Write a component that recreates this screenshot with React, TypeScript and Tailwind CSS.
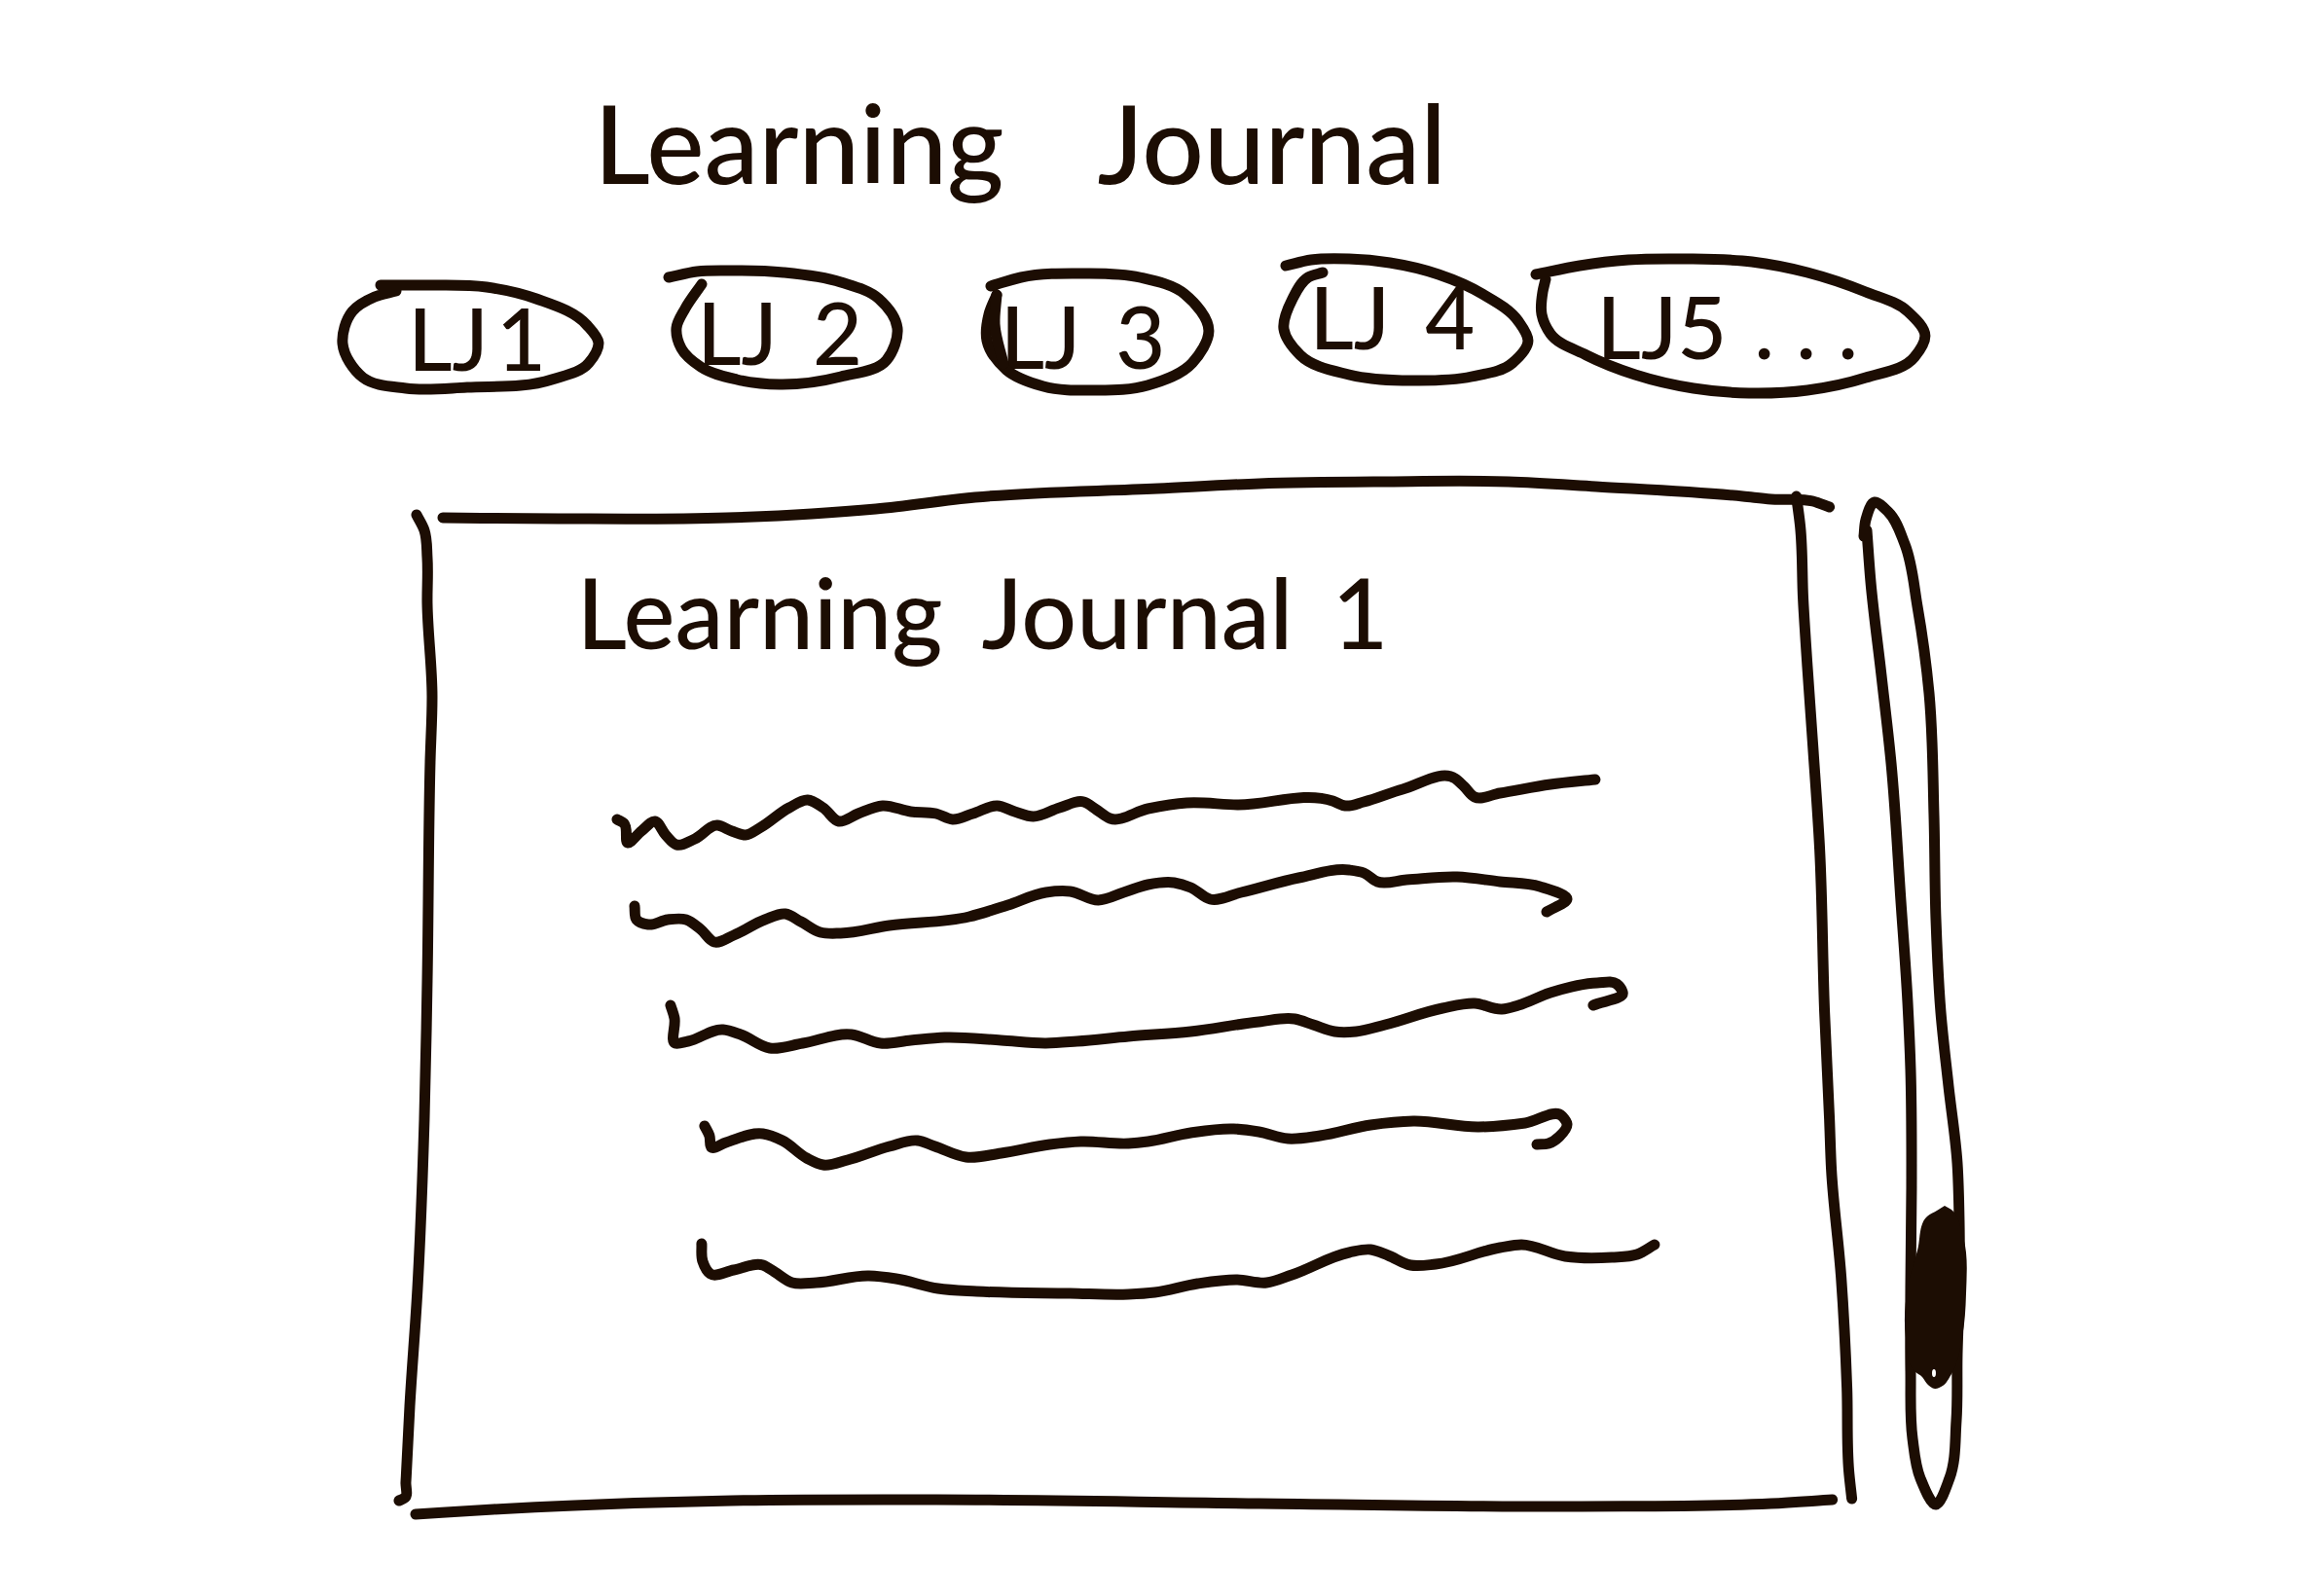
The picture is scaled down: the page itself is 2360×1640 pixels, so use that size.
import { useState } from "react";
import type { ReactNode } from "react";

type Point = [number, number];

const distance = (a: Point, b: Point) => Math.hypot(b[0] - a[0], b[1] - a[1]) || 1;

/** Direction of travel at point i, weighted by how near its neighbours are. */
function tangent(points: Point[], i: number): Point {
  const here = points[i];
  const before = points[i - 1];
  const after = points[i + 1];
  if (!before || !after) {
    const a = before ?? here;
    const b = after ?? here;
    const len = distance(a, b);
    return [(b[0] - a[0]) / len, (b[1] - a[1]) / len];
  }
  const d1 = distance(before, here);
  const d2 = distance(here, after);
  const along = (axis: 0 | 1) =>
    ((d2 * (here[axis] - before[axis])) / d1 + (d1 * (after[axis] - here[axis])) / d2) / (d1 + d2);
  return [along(0), along(1)];
}

/** Turns a list of points into one smooth pen stroke. */
function smooth(points: Point[]): string {
  let d = `M${points[0][0]} ${points[0][1]}`;
  for (let i = 0; i < points.length - 1; i++) {
    const a = points[i];
    const b = points[i + 1];
    const third = distance(a, b) / 3;
    const ta = tangent(points, i);
    const tb = tangent(points, i + 1);
    d += `C${a[0] + ta[0] * third} ${a[1] + ta[1] * third} ${b[0] - tb[0] * third} ${b[1] - tb[1] * third} ${b[0]} ${b[1]}`;
  }
  return d;
}

function Ink({ box, strokes, className, children }: { box: string; strokes: Point[][]; className: string; children?: ReactNode }) {
  return (
    <svg
      viewBox={box}
      preserveAspectRatio="none"
      aria-hidden="true"
      className={className}
      fill="none"
      stroke="currentColor"
      strokeWidth={11}
      strokeLinecap="round"
      strokeLinejoin="round"
    >
      {strokes.map((s, i) => (
        <path key={i} d={smooth(s)} vectorEffect="non-scaling-stroke" />
      ))}
      {children}
    </svg>
  );
}

const tabs: { label: string[]; pad: string; box: string; strokes: Point[][] }[] = [
  {
    label: ["LJ", "1"],
    pad: "gap-2 pr-10 pt-6",
    box: "342 260 336 150",
    strokes: [[[391, 293], [437, 293], [500, 295], [551, 307], [603, 334], [615, 352], [605, 373], [567, 390], [480, 398], [417, 399], [373, 388], [352, 353], [362, 320], [385, 305], [407, 299]]],
  },
  {
    label: ["LJ", "2"],
    pad: "gap-9 pr-20 pt-3",
    box: "678 260 326 150",
    strokes: [[[687, 285], [716, 279], [749, 278], [805, 280], [864, 290], [903, 307], [922, 337], [911, 370], [864, 387], [801, 395], [757, 390], [720, 377], [700, 358], [695, 337], [704, 317], [721, 292]]],
  },
  {
    label: ["LJ", "3"],
    pad: "gap-9 pr-22 pt-5",
    box: "1004 260 305 150",
    strokes: [
      [[1018, 294], [1049, 285], [1114, 281], [1171, 285], [1217, 302], [1242, 340], [1225, 373], [1179, 396], [1125, 401], [1072, 397], [1034, 380], [1014, 350], [1016, 323], [1024, 303]],
      [[1024, 303], [1022, 333], [1031, 374]],
    ],
  },
  {
    label: ["LJ", "4"],
    pad: "gap-9 pr-5 pb-5",
    box: "1309 260 263 150",
    strokes: [[[1321, 273], [1347, 267], [1386, 266], [1428, 270], [1478, 282], [1523, 302], [1560, 330], [1570, 350], [1554, 373], [1512, 387], [1451, 391], [1386, 385], [1336, 365], [1319, 338], [1328, 307], [1344, 285], [1359, 280]]],
  },
  {
    label: ["LJ5", ". . ."],
    pad: "gap-7 pr-10",
    box: "1572 260 446 150",
    strokes: [[[1578, 282], [1623, 273], [1673, 267], [1733, 266], [1800, 269], [1857, 280], [1917, 300], [1960, 320], [1978, 345], [1967, 367], [1917, 388], [1857, 401], [1797, 404], [1740, 399], [1680, 385], [1630, 365], [1593, 343], [1584, 323], [1585, 300], [1588, 287]]],
  },
];

const frame: Point[][] = [
  [[455, 532], [574, 533], [747, 532], [834, 528], [900, 523], [1002, 511], [1190, 502], [1294, 497], [1420, 495], [1550, 495], [1640, 500], [1791, 510], [1820, 513], [1863, 515], [1880, 521]],
  [[428, 529], [436, 545], [439, 573], [439, 620], [444, 715], [442, 783], [439, 1008], [436, 1150], [429, 1324], [421, 1445], [417, 1523], [416, 1539], [410, 1542]],
  [[427, 1556], [507, 1551], [590, 1547], [752, 1542], [963, 1541], [1294, 1545], [1625, 1548], [1820, 1545], [1883, 1541]],
  [[1846, 510], [1850, 541], [1853, 616], [1857, 680], [1863, 766], [1870, 873], [1875, 1040], [1880, 1150], [1882, 1202], [1892, 1312], [1898, 1426], [1900, 1512], [1903, 1540]],
];

const lines: { box: string; stroke: Point[] }[] = [
  {
    box: "630 780 1080 115",
    stroke: [[634, 842], [641, 846], [645, 866], [659, 854], [673, 844], [684, 858], [695, 868], [714, 862], [737, 848], [752, 854], [766, 858], [782, 850], [811, 830], [830, 822], [846, 830], [862, 844], [882, 836], [907, 828], [936, 834], [962, 836], [979, 842], [1000, 836], [1025, 828], [1043, 834], [1062, 839], [1089, 830], [1114, 824], [1127, 832], [1141, 841], [1180, 831], [1220, 825], [1272, 827], [1370, 823], [1383, 828], [1402, 824], [1442, 811], [1496, 800], [1505, 808], [1516, 819], [1542, 815], [1594, 806], [1640, 801]],
  },
  {
    box: "630 895 1080 115",
    stroke: [[652, 931], [654, 945], [666, 950], [686, 945], [705, 945], [720, 955], [734, 968], [754, 961], [786, 945], [807, 939], [823, 947], [843, 958], [864, 959], [914, 951], [996, 942], [1036, 930], [1075, 917], [1100, 916], [1129, 925], [1155, 917], [1180, 909], [1207, 907], [1224, 912], [1244, 924], [1276, 917], [1335, 902], [1387, 894], [1402, 897], [1416, 906], [1446, 904], [1498, 901], [1542, 906], [1583, 911], [1611, 924], [1590, 937]],
  },
  {
    box: "630 1010 1080 115",
    stroke: [[689, 1033], [693, 1046], [694, 1072], [707, 1070], [743, 1058], [761, 1063], [791, 1077], [825, 1072], [875, 1063], [905, 1072], [936, 1069], [971, 1066], [1029, 1069], [1075, 1072], [1107, 1070], [1160, 1065], [1224, 1060], [1294, 1050], [1331, 1047], [1350, 1053], [1372, 1060], [1394, 1060], [1424, 1053], [1483, 1036], [1516, 1031], [1544, 1037], [1561, 1033], [1594, 1020], [1642, 1010], [1662, 1011], [1668, 1019], [1638, 1033]],
  },
  {
    box: "630 1125 1080 115",
    stroke: [[724, 1157], [729, 1167], [731, 1179], [746, 1174], [784, 1165], [804, 1172], [829, 1190], [846, 1197], [871, 1192], [914, 1178], [943, 1172], [961, 1178], [993, 1189], [1029, 1185], [1079, 1176], [1111, 1173], [1160, 1175], [1180, 1173], [1224, 1164], [1268, 1160], [1294, 1163], [1324, 1170], [1357, 1167], [1409, 1156], [1453, 1152], [1520, 1158], [1568, 1154], [1606, 1147], [1611, 1155], [1603, 1168], [1592, 1175], [1580, 1176]],
  },
  {
    box: "630 1240 1080 115",
    stroke: [[721, 1278], [722, 1296], [730, 1309], [754, 1305], [784, 1300], [796, 1307], [814, 1318], [839, 1318], [893, 1311], [921, 1314], [964, 1324], [1004, 1327], [1100, 1329], [1160, 1330], [1187, 1328], [1231, 1319], [1272, 1315], [1302, 1318], [1328, 1310], [1387, 1287], [1409, 1284], [1427, 1290], [1450, 1300], [1476, 1299], [1542, 1282], [1564, 1279], [1609, 1291], [1657, 1292], [1683, 1289], [1701, 1279]],
  },
];

const track: Point[] = [[1915, 551], [1917, 534], [1926, 516], [1940, 526], [1957, 559], [1970, 623], [1982, 712], [1987, 837], [1989, 944], [1994, 1040], [2002, 1116], [2011, 1195], [2013, 1254], [2013, 1326], [2011, 1392], [2010, 1460], [2003, 1519], [1989, 1546], [1973, 1519], [1965, 1478], [1963, 1409], [1963, 1323], [1964, 1219], [1963, 1099], [1960, 1030], [1953, 926], [1943, 784], [1933, 694], [1922, 598], [1918, 545]];

const thumb: Point[] = [[1998, 1239], [2005, 1243], [2017, 1271], [2020, 1330], [2016, 1374], [2005, 1412], [1996, 1424], [1988, 1427], [1980, 1422], [1975, 1415], [1967, 1409], [1958, 1374], [1960, 1323], [1970, 1285], [1980, 1250], [1990, 1244], [1998, 1239]];

export default function App() {
  const [active, setActive] = useState(0);

  return (
    <div className="min-h-screen overflow-hidden bg-white font-['Lato',sans-serif] text-[#1c0d03]">
      <div className="mx-auto flex w-[71%] flex-col">
        <header className="flex h-[260px] items-start pt-20 pl-[16%]">
          <h1 className="flex gap-24 text-[112px] leading-[132px] font-medium whitespace-nowrap">
            <span>Learning</span> <span>Journal</span>
          </h1>
        </header>

        <nav aria-label="Journals" className="grid grid-cols-[336fr_326fr_305fr_263fr_446fr]">
          {tabs.map((tab, i) => (
            <button
              key={tab.box}
              type="button"
              aria-pressed={active === i}
              onClick={() => setActive(i)}
              className={`relative flex h-[150px] cursor-pointer items-center justify-center text-[88px] leading-none font-medium whitespace-nowrap ${tab.pad}`}
            >
              <Ink box={tab.box} strokes={tab.strokes} className="absolute inset-0 size-full overflow-visible" />
              <span>{tab.label[0]}</span> <span>{tab.label[1]}</span>
            </button>
          ))}
        </nav>

        <main className="mt-20 grid grid-cols-[1564fr_112fr]">
          <article id="journal" className="relative min-h-[1070px] pt-17 pb-22">
            <Ink box="342 490 1564 1070" strokes={frame} className="absolute inset-0 size-full overflow-visible" />
            <h2 className="flex gap-10 pl-[16%] text-[100px] leading-[140px] font-medium whitespace-nowrap">
              <span>Learning</span> <span>Journal</span> <span>1</span>
            </h2>
            <div className="mt-[82px] ml-[18.4%] flex w-[69%] flex-col">
              {lines.map((line) => (
                <Ink key={line.box} box={line.box} strokes={[line.stroke]} className="h-[115px] w-full overflow-visible" />
              ))}
            </div>
          </article>

          <div role="scrollbar" aria-label="Journal scroll position" aria-controls="journal" aria-valuenow={80} aria-orientation="vertical" className="relative">
            <Ink box="1906 490 112 1070" strokes={[track]} className="absolute inset-0 size-full overflow-visible">
              <path d={smooth(thumb) + "Z"} fill="currentColor" stroke="none" />
              <ellipse cx={1987} cy={1411} rx={2} ry={4} fill="white" stroke="none" />
            </Ink>
          </div>
        </main>
      </div>
    </div>
  );
}
